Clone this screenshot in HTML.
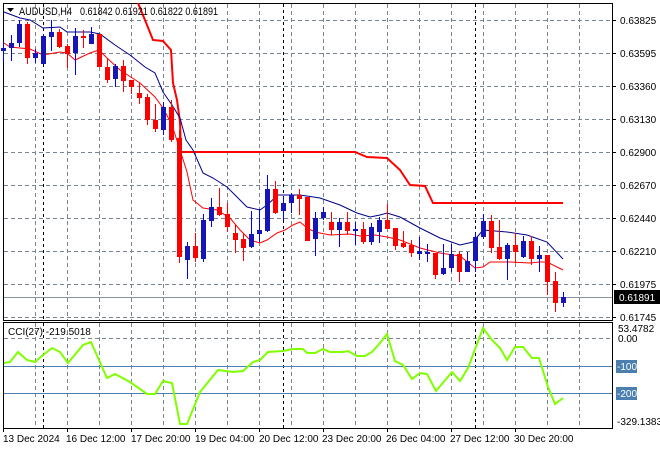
<!DOCTYPE html>
<html><head><meta charset="utf-8"><style>
html,body{margin:0;padding:0;background:#fff;}
svg{display:block;font-family:"Liberation Sans",sans-serif;}
</style></head><body>
<svg width="660" height="450" viewBox="0 0 660 450" xmlns="http://www.w3.org/2000/svg">
<rect width="660" height="450" fill="#fff"/>
<g stroke="#7a8592" stroke-width="1" stroke-dasharray="4,3" fill="none">
<path d="M4 20.5H612M4 53.5H612M4 86.5H612M4 119.5H612M4 152.5H612M4 185.5H612M4 218.5H612M4 251.5H612M4 284.5H612M4 317.5H612"/>
<path d="M35.5 4V320M67.5 4V320M99.5 4V320M131.5 4V320M163.5 4V320M195.5 4V320M227.5 4V320M259.5 4V320M291.5 4V320M323.5 4V320M355.5 4V320M387.5 4V320M419.5 4V320M451.5 4V320M483.5 4V320M515.5 4V320M547.5 4V320M579.5 4V320"/>
<path d="M35.5 323V428M67.5 323V428M99.5 323V428M131.5 323V428M163.5 323V428M195.5 323V428M227.5 323V428M259.5 323V428M291.5 323V428M323.5 323V428M355.5 323V428M387.5 323V428M419.5 323V428M451.5 323V428M483.5 323V428M515.5 323V428M547.5 323V428M579.5 323V428"/>
<path d="M4 338.5H612"/>
</g>
<g stroke="#000" stroke-width="1" stroke-dasharray="3,3">
<path d="M43.5 4V320M283.5 4V320M475.5 4V320M43.5 323V428M283.5 323V428M475.5 323V428"/>
</g>
<g stroke="#000" fill="none" stroke-width="1">
<rect x="3.5" y="3.5" width="609" height="317"/>
<rect x="3.5" y="322.5" width="609" height="106"/>
</g>
<path d="M4 297.5H612" stroke="#8895a5"/>
<polyline fill="none" stroke="#ff0000" stroke-width="2" points="138,3 147,25 153,40 163,41 171,50 173,83 177,100 180,122 181,152 355,152 367,157 387,158 400,170 410,185 425,186 433,203 563,203"/>
<polyline fill="none" stroke="#00008b" stroke-width="1" points="4,12 20,18 30,20 43,28 60,27 67,32 90,32 100,34 115,45 130,55 145,67 155,73 163,92 172,105 180,118 186,140 193,150 203,173 213,178 227,187 247,207 260,210 267,205 278,195 293,195 300,195 320,198 340,205 357,213 370,217 380,215 387,213 400,217 420,228 440,238 460,245 473,242 483,230 507,232 527,235 547,242 563,259"/>
<polyline fill="none" stroke="#ff0000" stroke-width="1" points="4,43 10,47 30,49 43,55 60,52 67,53 75,60 90,53 99,50 107,58 120,70 140,83 155,97 163,108 172,125 180,150 187,172 193,200 203,208 217,210 230,218 240,230 250,240 260,243 267,240 277,233 285,230 293,225 300,222 307,228 315,232 330,235 350,234 360,236 375,235 387,237 400,240 420,248 440,253 460,256 475,268 483,267 490,262 510,262 530,263 540,262 547,262 563,270"/>
<g>
<g stroke="#0000ff"><path d="M3.5 42V62M11.5 35V61M19.5 20V47M35.5 49V63M43.5 34V64M51.5 20V51M75.5 28V75M91.5 27V44M115.5 64V87M163.5 102V135M187.5 242V279M203.5 214V262M211.5 198V227M251.5 211V248M259.5 209V242M267.5 175V232M283.5 197V220M291.5 193V213M315.5 212V256M323.5 207V220M339.5 218V247M355.5 222V245M371.5 223V245M379.5 217V243M419.5 237V260M427.5 244V262M443.5 244V275M451.5 244V272M467.5 252V272M475.5 233V272M483.5 214V239M507.5 243V280M523.5 236V258M539.5 246V272M563.5 292V307"/></g>
<g fill="#1616b8">
<rect x="1" y="48" width="5" height="3"/><rect x="9" y="43" width="5" height="5"/><rect x="17" y="24" width="5" height="19"/><rect x="33" y="53" width="5" height="5"/><rect x="41" y="36" width="5" height="28"/><rect x="49" y="32" width="5" height="5"/><rect x="73" y="36" width="5" height="17"/><rect x="89" y="34" width="5" height="10"/><rect x="113" y="66" width="5" height="13"/><rect x="161" y="107" width="5" height="23"/><rect x="185" y="246" width="5" height="14"/><rect x="201" y="220" width="5" height="39"/><rect x="209" y="207" width="5" height="14"/><rect x="249" y="234" width="5" height="13"/><rect x="257" y="230" width="5" height="4"/><rect x="265" y="189" width="5" height="42"/><rect x="281" y="203" width="5" height="8"/><rect x="289" y="195" width="5" height="8"/><rect x="313" y="218" width="5" height="21"/><rect x="321" y="212" width="5" height="6"/><rect x="337" y="222" width="5" height="8"/><rect x="353" y="229" width="5" height="2"/><rect x="369" y="227" width="5" height="15"/><rect x="377" y="220" width="5" height="12"/><rect x="417" y="251" width="5" height="3"/><rect x="425" y="252" width="5" height="2"/><rect x="441" y="268" width="5" height="6"/><rect x="449" y="254" width="5" height="14"/><rect x="465" y="261" width="5" height="11"/><rect x="473" y="237" width="5" height="24"/><rect x="481" y="221" width="5" height="16"/><rect x="505" y="245" width="5" height="14"/><rect x="521" y="241" width="5" height="16"/><rect x="537" y="255" width="5" height="4"/><rect x="561" y="297" width="5" height="6"/>
</g>
<g stroke="#ff0000"><path d="M27.5 22V64M59.5 29V48M67.5 44V68M83.5 30V48M99.5 34V67M107.5 58V83M123.5 60V92M131.5 80V94M139.5 83V104M147.5 94V125M155.5 104V132M171.5 100V142M179.5 130V263M195.5 233V262M219.5 188V216M227.5 203V232M235.5 225V253M243.5 234V261M275.5 181V214M299.5 189V215M307.5 197V241M331.5 212V235M347.5 212V235M363.5 222V244M387.5 204V229M395.5 228V250M403.5 231V248M411.5 240V257M435.5 253V279M459.5 251V282M491.5 215V253M499.5 220V260M515.5 233V263M531.5 236V265M547.5 255V295M555.5 272V312"/></g>
<g fill="#ff0000">
<rect x="25" y="24" width="5" height="34"/><rect x="57" y="32" width="5" height="15"/><rect x="65" y="46" width="5" height="8"/><rect x="81" y="36" width="5" height="2"/><rect x="97" y="34" width="5" height="33"/><rect x="105" y="67" width="5" height="13"/><rect x="121" y="66" width="5" height="15"/><rect x="129" y="80" width="5" height="7"/><rect x="137" y="93" width="5" height="5"/><rect x="145" y="97" width="5" height="23"/><rect x="153" y="120" width="5" height="9"/><rect x="169" y="107" width="5" height="33"/><rect x="177" y="138" width="5" height="119"/><rect x="193" y="246" width="5" height="12"/><rect x="217" y="207" width="5" height="8"/><rect x="225" y="214" width="5" height="13"/><rect x="233" y="233" width="5" height="7"/><rect x="241" y="239" width="5" height="9"/><rect x="273" y="189" width="5" height="24"/><rect x="297" y="195" width="5" height="4"/><rect x="305" y="197" width="5" height="44"/><rect x="329" y="222" width="5" height="8"/><rect x="345" y="222" width="5" height="9"/><rect x="361" y="229" width="5" height="13"/><rect x="385" y="220" width="5" height="9"/><rect x="393" y="228" width="5" height="18"/><rect x="401" y="243" width="5" height="4"/><rect x="409" y="245" width="5" height="8"/><rect x="433" y="253" width="5" height="22"/><rect x="457" y="254" width="5" height="18"/><rect x="489" y="221" width="5" height="27"/><rect x="497" y="247" width="5" height="12"/><rect x="513" y="245" width="5" height="7"/><rect x="529" y="241" width="5" height="18"/><rect x="545" y="255" width="5" height="27"/><rect x="553" y="281" width="5" height="22"/>
</g>
</g>
<path d="M7 8h7l-3.5 4z" fill="#000"/>
<text x="19" y="15" font-size="11" fill="#000" textLength="53" lengthAdjust="spacingAndGlyphs">AUDUSD,H4</text>
<text x="80" y="15" font-size="11" fill="#000" textLength="138" lengthAdjust="spacingAndGlyphs">0.61842 0.61921 0.61822 0.61891</text>
<g font-size="10" fill="#000">
<text x="620" y="24">0.63825</text>
<text x="620" y="57">0.63595</text>
<text x="620" y="90">0.63360</text>
<text x="620" y="123">0.63130</text>
<text x="620" y="156">0.62900</text>
<text x="620" y="189">0.62670</text>
<text x="620" y="222">0.62440</text>
<text x="620" y="255">0.62210</text>
<text x="620" y="288">0.61975</text>
<text x="620" y="321">0.61745</text>
</g>
<g stroke="#000"><path d="M613 20.5h3M613 53.5h3M613 86.5h3M613 119.5h3M613 152.5h3M613 185.5h3M613 218.5h3M613 251.5h3M613 284.5h3M613 317.5h3"/></g>
<rect x="614" y="290" width="46" height="14" fill="#000"/>
<text x="619" y="301" font-size="10" fill="#fff">0.61891</text>
<path d="M4 366.5H612M4 393.5H612" stroke="#4a7fb0" stroke-width="1"/>
<polyline fill="none" stroke="#7fff00" stroke-width="2" points="4,363 10,362 18,352 27,360 35,362 43,355 52,348 60,352 68,363 83,345 91,342 107,378 115,374 130,382 147,394 155,394 163,381 172,383 180,424 187,424 200,392 218,370 233,372 243,371 253,362 260,360 268,352 283,351 293,349 303,349 307,353 315,353 323,349 330,352 343,352 348,351 357,356 365,356 372,352 380,343 387,334 395,361 403,365 412,379 420,373 427,374 436,391 452,372 460,381 468,368 483,328 492,340 500,348 507,360 515,347 523,347 532,358 539,358 548,387 555,404 563,398"/>
<text x="8" y="335" font-size="10" fill="#000">CCI(27) -219.5018</text>
<g font-size="10" fill="#000">
<text x="618" y="332">53.4782</text>
<text x="618" y="342">0.00</text>
<text x="617" y="425">-329.1383</text>
</g>
<rect x="616" y="360" width="21" height="13" fill="#4a7fb0"/>
<rect x="616" y="387" width="21" height="13" fill="#4a7fb0"/>
<text x="617" y="370" font-size="10" fill="#fff">-100</text>
<text x="617" y="397" font-size="10" fill="#fff">-200</text>
<g stroke="#000"><path d="M3.5 429v3M67.5 429v3M131.5 429v3M195.5 429v3M259.5 429v3M323.5 429v3M387.5 429v3M451.5 429v3M515.5 429v3"/></g>
<g font-size="10" fill="#000">
<text x="3" y="442">13 Dec 2024</text>
<text x="66" y="442">16 Dec 12:00</text>
<text x="131" y="442">17 Dec 20:00</text>
<text x="195" y="442">19 Dec 04:00</text>
<text x="259" y="442">20 Dec 12:00</text>
<text x="322" y="442">23 Dec 20:00</text>
<text x="386" y="442">26 Dec 04:00</text>
<text x="450" y="442">27 Dec 12:00</text>
<text x="514" y="442">30 Dec 20:00</text>
</g>
</svg>
</body></html>
